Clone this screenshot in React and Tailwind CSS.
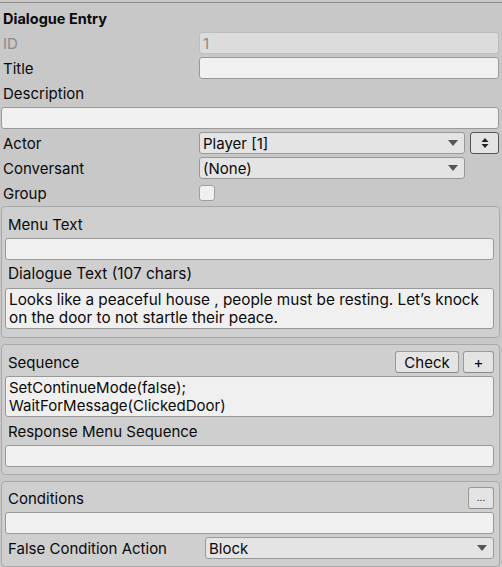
import React from "react";

const field =
  "h-[22px] rounded-[3px] border border-[#999999] bg-[#f0f0f0] px-[3px] flex items-center";

function Caret() {
  return (
    <svg width="10" height="6" viewBox="0 0 10 6" className="shrink-0">
      <path d="M0 0 L10 0 L5 6 Z" fill="#555555" />
    </svg>
  );
}

function Dropdown({ value, className = "" }) {
  return (
    <div
      className={`h-[22px] rounded-[3px] border border-[#999999] bg-[#e4e4e4] pl-[3px] pr-[6px] flex items-center justify-between ${className}`}
    >
      <span>{value}</span>
      <Caret />
    </div>
  );
}

function Row({ label, muted, children }) {
  return (
    <div className="h-[22px] flex items-center">
      <div className={`w-[199px] pl-[3px] ${muted ? "text-[#8a8a8a]" : ""}`}>
        {label}
      </div>
      <div className="flex-1 pr-[3px] flex items-center gap-[5px]">
        {children}
      </div>
    </div>
  );
}

function Btn({ children, className = "" }) {
  return (
    <div
      className={`h-[22px] rounded-[3px] border border-[#999999] border-b-[#8a8a8a] bg-[#e4e4e4] flex items-center justify-center ${className}`}
    >
      {children}
    </div>
  );
}

function Box({ children, className = "" }) {
  return (
    <div
      className={`mx-[1px] mr-[2px] rounded-[4px] border border-[#a9a9a9] bg-[#cfcfcf] pl-[3px] pr-[5px] flex flex-col gap-[3px] ${className}`}
    >
      {children}
    </div>
  );
}

export default function App() {
  return (
    <div
      className="w-[502px] h-[567px] overflow-hidden bg-[#c8c8c8] text-[15px] text-[#0a0a0a] leading-none"
      style={{ fontFamily: "Inter, 'Noto Sans', sans-serif" }}
    >
      <div className="mt-[2px] h-px bg-[#8e8e8e]" />
      <div className="h-[26px] mt-[3px] pl-[3px] flex items-center font-bold text-[14.5px]">
        Dialogue Entry
      </div>

      <div className="flex flex-col gap-[3px]">
        <Row label="ID" muted>
          <div className="h-[22px] flex-1 rounded-[3px] border border-[#bdbdbd] bg-[#dcdcdc] px-[3px] flex items-center text-[#8a8a8a]">
            1
          </div>
        </Row>
        <Row label="Title">
          <div className={`${field} flex-1`} />
        </Row>
        <div className="h-[22px] flex items-center pl-[3px]">Description</div>
        <div className="pl-[1px] pr-[3px]">
          <div className={field} />
        </div>
        <Row label="Actor">
          <Dropdown value="Player [1]" className="flex-1" />
          <div className="h-[22px] w-[29px] rounded-[3px] border border-[#555555] bg-[#e4e4e4] flex items-center justify-center">
            <svg width="8" height="12" viewBox="0 0 8 12">
              <path d="M4 1 L7.5 5 L0.5 5 Z M0.5 7 L7.5 7 L4 11 Z" fill="#222222" />
            </svg>
          </div>
        </Row>
        <Row label="Conversant">
          <div className="w-[266px]">
            <Dropdown value="(None)" />
          </div>
        </Row>
        <Row label="Group">
          <div className="w-[16px] h-[16px] rounded-[3px] border border-[#a0a0a0] bg-[#f0f0f0]" />
        </Row>
      </div>

      <Box className="mt-[2px] pt-[6px] pb-[8px]">
        <div className="h-[22px] flex items-center pl-[3px]">Menu Text</div>
        <div className={field} />
        <div className="h-[22px] flex items-center pl-[3px] text-[15.4px]">
          Dialogue Text (107 chars)
        </div>
        <div className="h-[41px] rounded-[3px] border border-[#999999] bg-[#f0f0f0] px-[3px] pt-[2px] leading-[18px] text-[15.3px]">
          Looks like a peaceful house , people must be resting. Let’s knock
          <br />
          on the door to not startle their peace.
        </div>
      </Box>

      <Box className="mt-[6px] pt-[6px] pb-[7px]">
        <div className="h-[22px] flex items-center">
          <div className="flex-1 pl-[3px]">Sequence</div>
          <Btn className="w-[64px]">Check</Btn>
          <Btn className="w-[31px] ml-[4px]">+</Btn>
        </div>
        <div className="h-[41px] rounded-[3px] border border-[#999999] bg-[#f0f0f0] px-[3px] pt-[2px] leading-[18px]">
          SetContinueMode(false);
          <br />
          WaitForMessage(ClickedDoor)
        </div>
        <div className="h-[22px] flex items-center pl-[3px]">
          Response Menu Sequence
        </div>
        <div className={field} />
      </Box>

      <Box className="mt-[6px] pt-[5px] pb-[7px]">
        <div className="h-[22px] flex items-center">
          <div className="flex-1 pl-[3px]">Conditions</div>
          <Btn className="w-[26px] text-[10px] pb-[2px]">...</Btn>
        </div>
        <div className={field} />
        <div className="h-[22px] flex items-center">
          <div className="w-[200px] pl-[3px]">False Condition Action</div>
          <Dropdown value="Block" className="flex-1" />
        </div>
      </Box>
    </div>
  );
}
